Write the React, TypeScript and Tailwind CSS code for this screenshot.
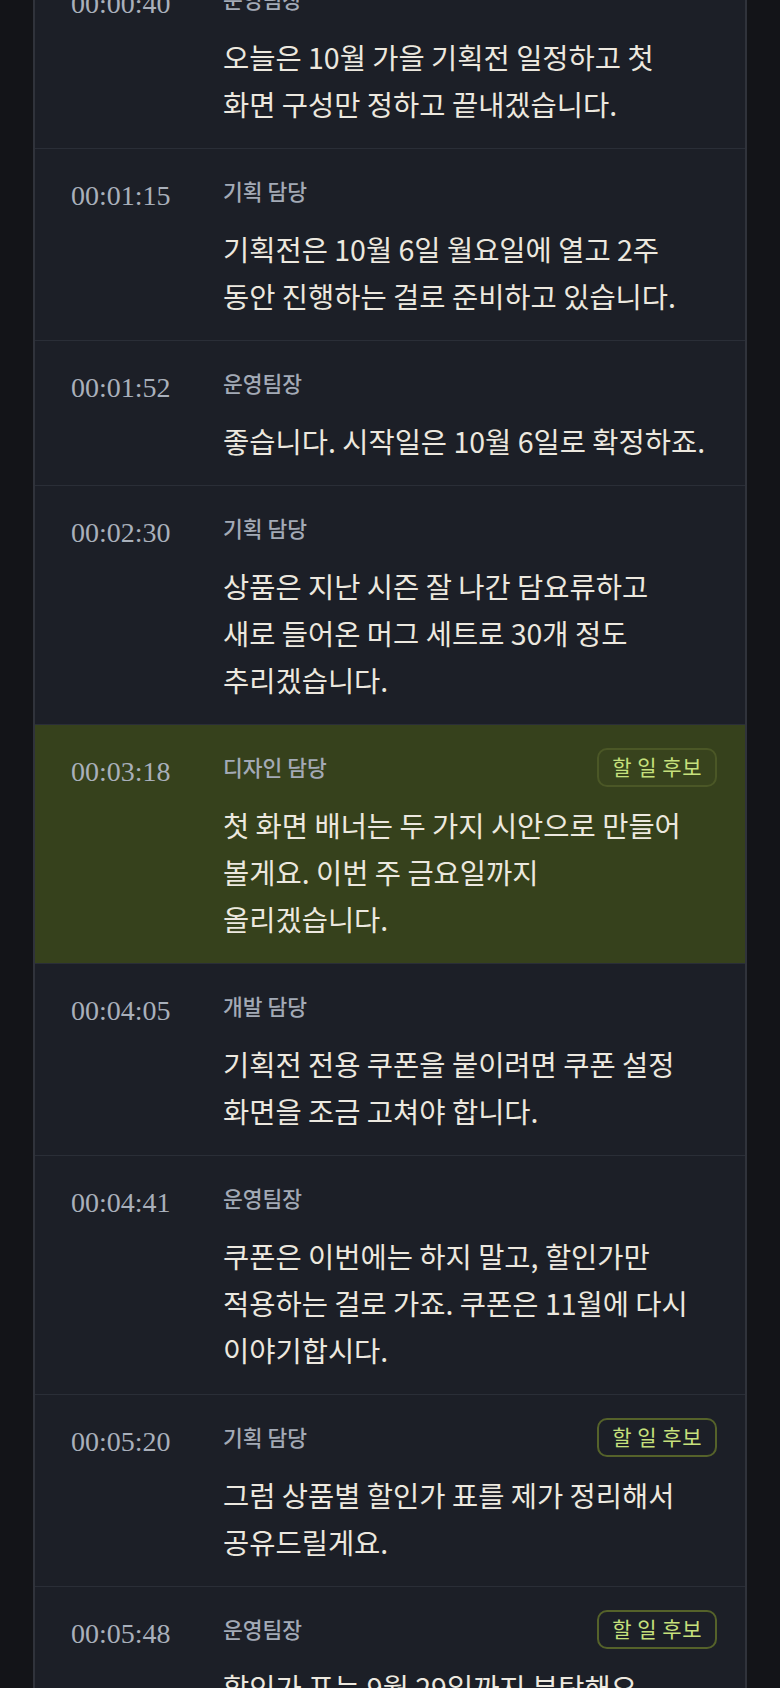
import React from "react";

type Line = {
  time: string;
  speaker: string;
  text: string;
  todo?: boolean;
  highlight?: boolean;
};

const lines: Line[] = [
  {
    time: "00:00:40",
    speaker: "운영팀장",
    text: "오늘은 10월 가을 기획전 일정하고 첫 화면 구성만 정하고 끝내겠습니다.",
  },
  {
    time: "00:01:15",
    speaker: "기획 담당",
    text: "기획전은 10월 6일 월요일에 열고 2주 동안 진행하는 걸로 준비하고 있습니다.",
  },
  {
    time: "00:01:52",
    speaker: "운영팀장",
    text: "좋습니다. 시작일은 10월 6일로 확정하죠.",
  },
  {
    time: "00:02:30",
    speaker: "기획 담당",
    text: "상품은 지난 시즌 잘 나간 담요류하고 새로 들어온 머그 세트로 30개 정도 추리겠습니다.",
  },
  {
    time: "00:03:18",
    speaker: "디자인 담당",
    text: "첫 화면 배너는 두 가지 시안으로 만들어 볼게요. 이번 주 금요일까지 올리겠습니다.",
    todo: true,
    highlight: true,
  },
  {
    time: "00:04:05",
    speaker: "개발 담당",
    text: "기획전 전용 쿠폰을 붙이려면 쿠폰 설정 화면을 조금 고쳐야 합니다.",
  },
  {
    time: "00:04:41",
    speaker: "운영팀장",
    text: "쿠폰은 이번에는 하지 말고, 할인가만 적용하는 걸로 가죠. 쿠폰은 11월에 다시 이야기합시다.",
  },
  {
    time: "00:05:20",
    speaker: "기획 담당",
    text: "그럼 상품별 할인가 표를 제가 정리해서 공유드릴게요.",
    todo: true,
  },
  {
    time: "00:05:48",
    speaker: "운영팀장",
    text: "할인가 표는 9월 29일까지 부탁해요.",
    todo: true,
  },
];

function TodoBadge({ onHighlight }: { onHighlight?: boolean }) {
  return (
    <span
      className={
        "flex h-[39px] items-center rounded-[10px] border-2 px-[13px] text-[21px] tracking-[0.5px] text-[#c6e07c] " +
        (onHighlight ? "border-[#4b5726] bg-[#38431d]" : "border-[#55622a] bg-transparent")
      }
    >
      할 일 후보
    </span>
  );
}

function Row({ line }: { line: Line }) {
  return (
    <div
      className={
        "flex border-b border-[#2a2e37] pb-[21px] pl-[36px] pr-[28px] pt-[22px] " +
        (line.highlight ? "bg-[#36411c]" : "")
      }
    >
      <div
        className="mt-[5px] w-[152px] shrink-0 text-[28px] leading-[40px] text-[#a9b0bb]"
        style={{ fontFamily: '"Liberation Serif", "Times New Roman", serif' }}
      >
        {line.time}
      </div>
      <div className="min-w-0 flex-1">
        <div className="flex h-[40px] items-center justify-between">
          <span className="text-[21.5px] font-medium text-[#a3aab6]">{line.speaker}</span>
          {line.todo && <TodoBadge onHighlight={line.highlight} />}
        </div>
        <p className="mt-[14px] max-w-[483.5px] break-keep text-[28.5px] leading-[47px] text-[#ece8df]">
          {line.text}
        </p>
      </div>
    </div>
  );
}

export default function App() {
  return (
    <div
      className="h-[1688px] overflow-hidden bg-[#131418]"
      style={{ fontFamily: '"Noto Sans CJK KR", "Noto Sans", sans-serif' }}
    >
      <div className="mx-[33px] -mt-[43px] border-x-2 border-[#30333b] bg-[#1c1f27]">
        {lines.map((line) => (
          <Row key={line.time} line={line} />
        ))}
      </div>
    </div>
  );
}
